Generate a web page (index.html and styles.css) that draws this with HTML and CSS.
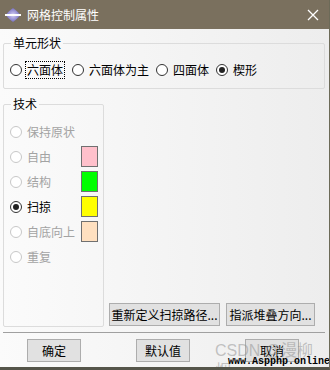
FILE: index.html
```html
<!DOCTYPE html>
<html lang="zh">
<head>
  <meta charset="UTF-8">
  <title>网格控制属性</title>
  <link rel="stylesheet" href="styles.css">
</head>
<body>
  <div class="window">
    <div class="titlebar">
      <svg class="app-icon" width="18" height="16" viewBox="0 0 18 16">
        <defs>
          <radialGradient id="gem" cx="50%" cy="50%" r="55%">
            <stop offset="0" stop-color="#d6d2f4"/>
            <stop offset="1" stop-color="#6d66bd"/>
          </radialGradient>
        </defs>
        <path d="M9 1 C12 3 15 6 16 8 C15 10 12 13 9 15 C6 13 3 10 2 8 C3 6 6 3 9 1 Z" fill="url(#gem)"/>
        <rect x="1" y="7" width="16" height="2" fill="#fff"/>
      </svg>
      <span class="title">网格控制属性</span>
      <svg class="close" width="12" height="12" viewBox="0 0 12 12">
        <path d="M1 1 L11 11 M11 1 L1 11" stroke="#fff" stroke-width="1.3"/>
      </svg>
    </div>

    <div class="content">
      <fieldset class="group shape">
        <legend>单元形状</legend>
        <div class="shape-row">
          <label class="opt"><span class="radio"></span><span class="focus">六面体</span></label>
          <label class="opt"><span class="radio"></span>六面体为主</label>
          <label class="opt"><span class="radio"></span>四面体</label>
          <label class="opt"><span class="radio checked"></span>楔形</label>
        </div>
      </fieldset>

      <div class="middle">
        <fieldset class="group tech">
          <legend>技术</legend>
          <div class="tech-row disabled"><span class="radio"></span>保持原状</div>
          <div class="tech-row disabled"><span class="radio"></span>自由<span class="swatch pink"></span></div>
          <div class="tech-row disabled"><span class="radio"></span>结构<span class="swatch green"></span></div>
          <div class="tech-row"><span class="radio checked"></span>扫掠<span class="swatch yellow"></span></div>
          <div class="tech-row disabled"><span class="radio"></span>自底向上<span class="swatch peach"></span></div>
          <div class="tech-row disabled"><span class="radio"></span>重复</div>
        </fieldset>
        <div class="side-buttons">
          <button class="btn sweep">重新定义扫掠路径...</button>
          <button class="btn stack">指派堆叠方向...</button>
        </div>
      </div>

      <div class="separator"></div>

      <div class="footer">
        <button class="btn foot">确定</button>
        <button class="btn foot">默认值</button>
        <button class="btn foot">取消</button>
      </div>
    </div>

    <div class="watermark">CSDN @漫柳烟</div>
    <div class="site-mark">www.Aspphp.online</div>
  </div>
</body>
</html>
```

FILE: styles.css
```css
body {
  margin: 0;
  font-family: "Noto Sans CJK SC", "Noto Sans", sans-serif;
  font-size: 12px;
  color: #000;
}

.window {
  position: relative;
  width: 330px;
  height: 370px;
  box-sizing: border-box;
  background: linear-gradient(to right, #fbfbfb, #ededed);
  border-right: 1px solid #6c6a58;
  border-bottom: 3px solid #55554a;
  overflow: hidden;
}

.titlebar {
  height: 29px;
  background-color: #7a705e;
  display: flex;
  align-items: center;
  padding-left: 4px;
  color: #fff;
}

.app-icon {
  margin-right: 5px;
}

.title {
  font-size: 12px;
  line-height: 16px;
}

.close {
  margin-left: auto;
  margin-right: 10px;
}

.content {
  padding: 6px 4px 0 3px;
}

.group {
  margin: 0;
  padding: 0 0 0 6px;
  border: 1px solid #dcdcdc;
  border-radius: 2px;
}

.group legend {
  margin-left: 1px;
  padding: 0 2px;
  line-height: 16px;
}

.shape {
  padding-top: 10px;
  padding-bottom: 9px;
}

.shape-row {
  display: flex;
  align-items: center;
  height: 18px;
}

.opt {
  display: flex;
  align-items: center;
  margin-right: 7px;
  line-height: 16px;
}

.radio {
  width: 12px;
  height: 12px;
  box-sizing: border-box;
  border: 1px solid #333;
  border-radius: 50%;
  margin-right: 5px;
  flex: none;
  display: flex;
  align-items: center;
  justify-content: center;
  background: #fff;
}

.radio.checked::after {
  content: "";
  width: 6px;
  height: 6px;
  border-radius: 50%;
  background: #222;
}

.focus {
  border: 1px dotted #000;
  padding: 0 1px;
  margin-left: -2px;
}

.middle {
  display: flex;
  margin-top: 7px;
  height: 231px;
}

.tech {
  width: 101px;
  box-sizing: border-box;
  padding-top: 7px;
  padding-right: 5px;
}

.tech-row {
  display: flex;
  align-items: center;
  height: 25px;
}

.tech-row.disabled {
  color: #a3a3a3;
}

.tech-row.disabled .radio {
  border-color: #c8c8c8;
}

.swatch {
  margin-left: auto;
  width: 17px;
  height: 21px;
  box-sizing: border-box;
  border: 1px solid #707070;
}

.pink { background: #ffc0cb; }
.green { background: #00ff00; }
.yellow { background: #ffff00; }
.peach { background: #ffe0c0; }

.side-buttons {
  flex: 1;
  display: flex;
  align-items: flex-end;
  gap: 6px;
  padding-left: 5px;
  padding-bottom: 1px;
}

.btn {
  font-family: inherit;
  font-size: 12px;
  color: #000;
  background-color: #e1e1e1;
  border: 1px solid #adadad;
  border-radius: 0;
  height: 23px;
  padding: 0;
  line-height: 16px;
}

.sweep {
  width: 111px;
}

.stack {
  width: 89px;
}

.separator {
  margin-top: 5px;
  height: 1px;
  background-color: #a0a0a0;
}

.footer {
  display: flex;
  gap: 55px;
  padding-left: 24px;
  margin-top: 6px;
}

.foot {
  width: 54px;
}

.watermark {
  position: absolute;
  left: 215px;
  top: 341px;
  font-size: 16px;
  line-height: 20px;
  color: rgba(150, 150, 150, 0.55);
  font-family: "Liberation Sans", "Noto Sans CJK SC", sans-serif;
}

.site-mark {
  position: absolute;
  left: 228px;
  top: 356px;
  font-family: "Liberation Mono", monospace;
  font-weight: bold;
  font-size: 10px;
  line-height: 11px;
  color: #000;
}
```
